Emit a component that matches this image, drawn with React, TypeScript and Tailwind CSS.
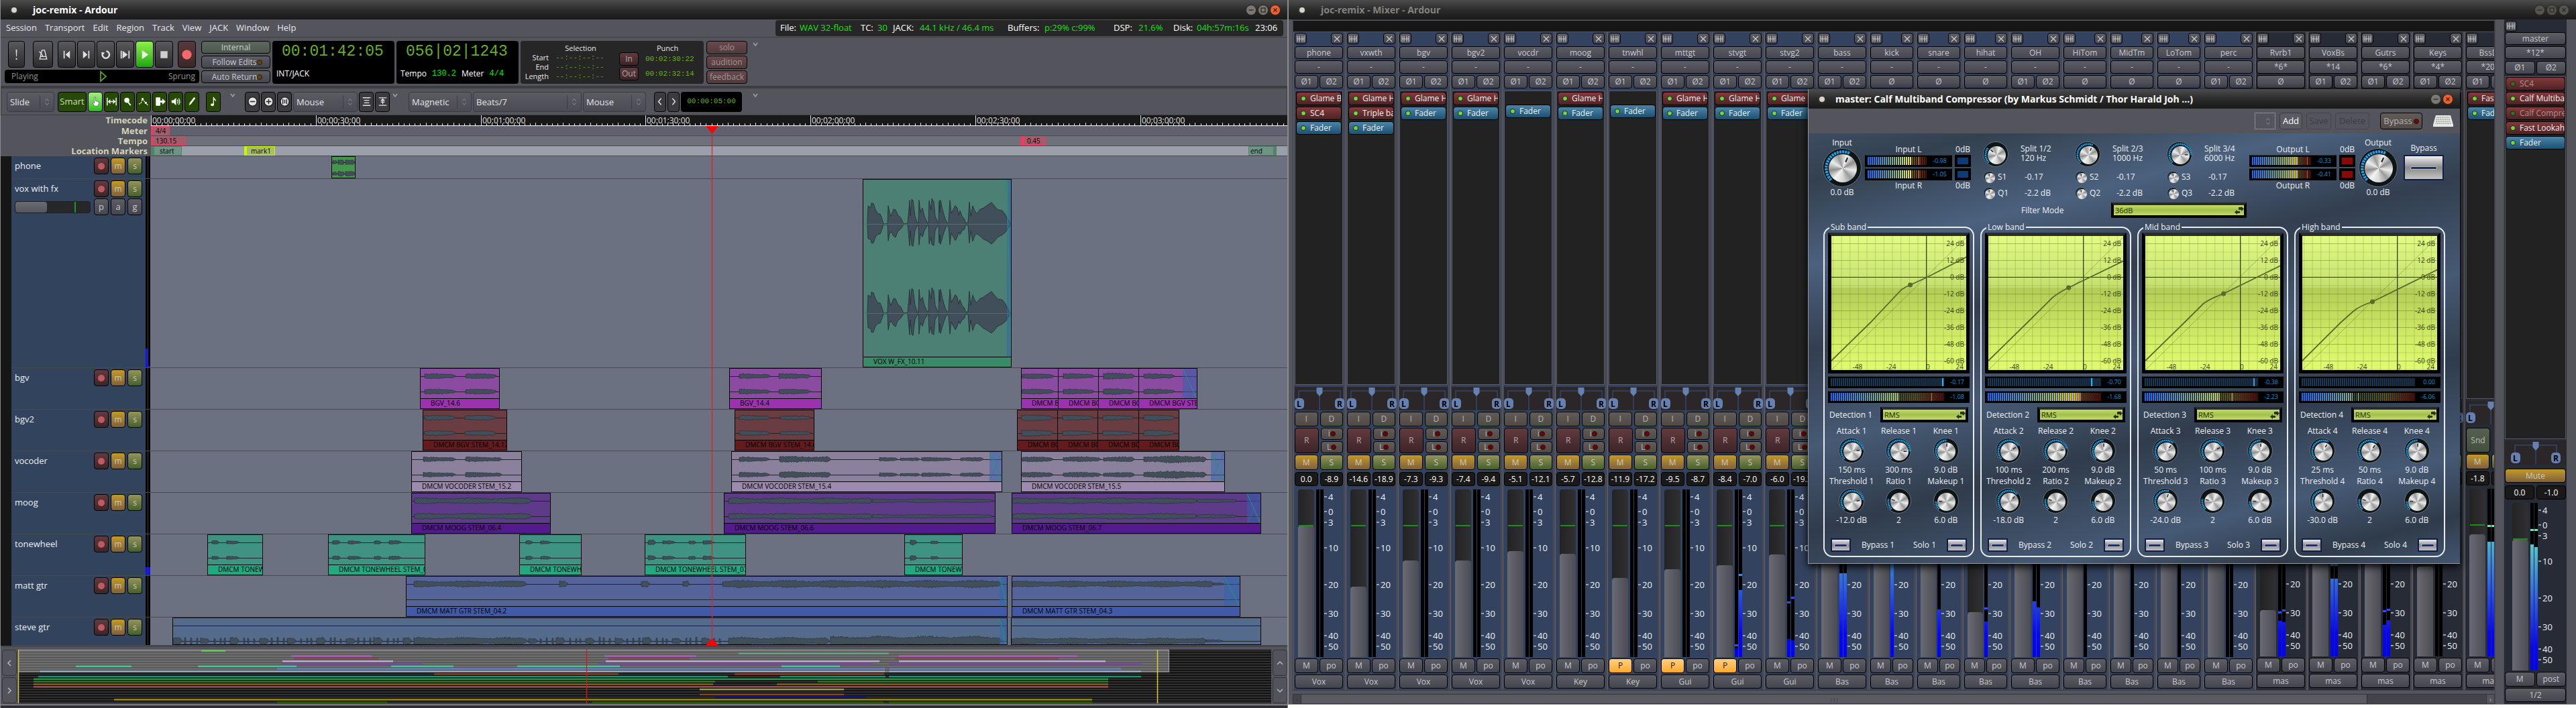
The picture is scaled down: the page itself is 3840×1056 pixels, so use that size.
import React from 'react';
import clsx from 'clsx';

/* ---------- data ---------- */

type Seg = [number, number, number];
type RegionData = { x: number; w: number; label?: string; segs: Seg[]; fade?: number };

const VOX_ENV: [number, number][] = [
  [6, 0], [7, 27], [11, 25], [12, 32], [15, 31], [18, 22], [22, 16], [25, 16], [28, 8], [30, 1], [36, 1], [37, 28], [39, 18],
  [41, 12], [45, 22], [48, 22], [51, 14], [56, 9], [60, 1], [66, 1], [69, 36], [70, 12], [72, 37], [74, 36], [77, 12], [80, 3],
  [82, 2], [83, 36], [85, 18], [88, 24], [91, 12], [95, 3], [97, 2], [98, 35], [101, 22], [102, 38], [105, 34], [107, 12],
  [111, 2], [112, 2], [113, 35], [114, 18], [115, 36], [118, 22], [122, 8], [125, 2], [127, 4], [129, 36], [131, 16], [137, 28],
  [140, 24], [142, 14], [144, 20], [147, 12], [151, 8], [152, 2], [156, 2], [158, 33], [160, 12], [163, 28], [166, 20],
  [169, 16], [174, 22], [178, 24], [184, 28], [191, 33], [195, 28], [200, 22], [207, 20], [212, 14], [215, 8], [221, 0],
];

const blips = (from: number, to: number): Seg[] => {
  const out: Seg[] = [];
  let x = from;
  let i = 0;
  while (x < to) {
    const len = i % 4 === 0 ? 13 : 2;
    out.push([x, Math.min(x + len, to), 6]);
    x += len + (i % 3 === 0 ? 4 : 7);
    i++;
  }
  return out;
};

const TRACKS: {
  name: string;
  row: string;
  body: string;
  tag: string;
  extra?: boolean;
  only?: number;
  meter?: number[];
  regions: RegionData[];
}[] = [
  {
    name: 'phone', row: 'h-[34px]', body: 'bg-[#43964a]', tag: '',
    regions: [{ x: 270, w: 36, segs: [[1, 7, 3], [9, 18, 4], [20, 35, 4]] }],
  },
  {
    name: 'vox with fx', row: 'h-[282px]', body: 'bg-[#4d8074]', tag: 'bg-[#3a8a69]', extra: true, meter: [28, 2],
    regions: [{ x: 1062, w: 222, label: 'VOX W_FX_10.11', segs: [], fade: 7 }],
  },
  {
    name: 'bgv', row: 'h-[62px]', body: 'bg-[#8a4ba0]', tag: 'bg-[#9b32ae]',
    regions: [
      { x: 402, w: 119, label: 'BGV_14.6', segs: [[6, 52, 4], [67, 113, 4]] },
      { x: 863, w: 138, label: 'BGV_14.4', segs: [[14, 60, 4], [73, 120, 4]] },
      { x: 1298, w: 56, label: 'DMCM BGV', segs: [[1, 48, 4]] },
      { x: 1353, w: 61, label: 'DMCM BGV', segs: [[7, 53, 4]] },
      { x: 1413, w: 61, label: 'DMCM BGV', segs: [[7, 53, 5]] },
      { x: 1473, w: 88, label: 'DMCM BGV STEM', segs: [[7, 53, 4]], fade: 22 },
    ],
  },
  {
    name: 'bgv2', row: 'h-[62px]', body: 'bg-[#6a3d42]', tag: 'bg-[#651a1e]',
    regions: [
      { x: 406, w: 126, label: 'DMCM BGV STEM_14.12', segs: [[2, 48, 4], [62, 108, 4]] },
      { x: 871, w: 119, label: 'DMCM BGV STEM_14.6', segs: [[6, 52, 4], [67, 113, 3]] },
      { x: 1292, w: 61, label: 'DMCM BGV', segs: [[6, 53, 5]] },
      { x: 1352, w: 61, label: 'DMCM BGV', segs: [[7, 53, 4]] },
      { x: 1412, w: 62, label: 'DMCM BGV', segs: [[7, 53, 4]] },
      { x: 1473, w: 61, label: 'DMCM BGV', segs: [[7, 53, 5]] },
    ],
  },
  {
    name: 'vocoder', row: 'h-[62px]', body: 'bg-[#8b819c]', tag: 'bg-[#9c8bae]',
    regions: [
      { x: 389, w: 165, label: 'DMCM VOCODER STEM_15.2', segs: [[17, 65, 4], [80, 134, 4]] },
      { x: 866, w: 404, label: 'DMCM VOCODER STEM_15.4', segs: [[11, 56, 4], [71, 147, 5], [220, 247, 3], [251, 280, 3], [283, 328, 3], [341, 375, 3]], fade: 19 },
      { x: 1298, w: 304, label: 'DMCM VOCODER STEM_15.5', segs: [[1, 47, 4], [62, 118, 4], [122, 168, 4], [182, 275, 6]], fade: 21 },
    ],
  },
  {
    name: 'moog', row: 'h-[62px]', body: 'bg-[#5e3b88]', tag: 'bg-[#531b8d]',
    regions: [
      { x: 389, w: 208, label: 'DMCM MOOG STEM_06.4', segs: [[4, 178, 5]] },
      { x: 855, w: 405, label: 'DMCM MOOG STEM_06.6', segs: [[6, 220, 5], [220, 400, 3]] },
      { x: 1284, w: 372, label: 'DMCM MOOG STEM_06.7', segs: [[0, 275, 5], [275, 335, 3]], fade: 21 },
    ],
  },
  {
    name: 'tonewheel', row: 'h-[62px]', body: 'bg-[#409283]', tag: 'bg-[#22a883]', meter: [12, 12],
    regions: [
      { x: 85, w: 83, label: 'DMCM TONEWHEEL', segs: [[6, 16, 3], [28, 46, 3]] },
      { x: 265, w: 145, label: 'DMCM TONEWHEEL STEM_07', segs: [[6, 17, 3], [29, 48, 3], [68, 78, 3], [90, 108, 3]] },
      { x: 550, w: 93, label: 'DMCM TONEWHEEL', segs: [[9, 19, 3], [31, 46, 3]] },
      { x: 737, w: 151, label: 'DMCM TONEWHEEL STEM_07', segs: [[4, 15, 4], [26, 44, 3], [65, 75, 3], [86, 102, 3]] },
      { x: 1124, w: 87, label: 'DMCM TONEWHEEL', segs: [[8, 17, 4], [39, 50, 3]] },
    ],
  },
  {
    name: 'matt gtr', row: 'h-[62px]', body: 'bg-[#546499]', tag: 'bg-[#405aa8]', only: 0,
    regions: [
      { x: 381, w: 897, label: 'DMCM MATT GTR STEM_04.2', segs: [[11, 179, 5], [228, 240, 5], [350, 362, 5], [412, 421, 5], [471, 887, 6]], fade: 12 },
      { x: 1284, w: 341, label: 'DMCM MATT GTR STEM_04.3', segs: [[0, 300, 5], [300, 315, 2]], fade: 24 },
    ],
  },
  {
    name: 'steve gtr', row: 'h-[42px]', body: 'bg-[#546b8c]', tag: 'bg-[#4a6a9a]', only: 1,
    regions: [
      { x: 33, w: 1245, segs: [...blips(0, 355), [359, 528, 6], ...blips(530, 820), [828, 978, 6], [980, 1235, 8]], fade: 12 },
      { x: 1283, w: 373, segs: [[0, 290, 5], [290, 315, 2]] },
    ],
  },
];

const SUMMARY: { color: string; bars: [number, number][] }[] = [
  { color: '#5cc34e', bars: [[299, 335]] },
  { color: '#5fa98a', bars: [[1100, 1324]] },
  { color: '#bf55c4', bars: [[433, 553], [900, 1037], [1339, 1605]] },
  { color: '#8a4a4c', bars: [[437, 564], [906, 1027], [1333, 1577]] },
  { color: '#c0b0cf', bars: [[420, 585], [902, 1310], [1339, 1647]] },
  { color: '#7c49a8', bars: [[419, 629], [891, 1300], [1324, 1700]] },
  { color: '#4cc29a', bars: [[112, 195], [294, 441], [582, 675], [770, 923], [1164, 1251]] },
  { color: '#6a80c0', bars: [[412, 1318], [1325, 1670]] },
  { color: '#8aa4be', bars: [[59, 1318], [1325, 1700]] },
  { color: '#8e4523', bars: [[646, 921], [1094, 1317]] },
  { color: '#1f9070', bars: [[56, 1084], [1162, 1319], [1324, 1700]] },
  { color: '#35924c', bars: [[49, 1651]] },
  { color: '#2c7a2c', bars: [[49, 1065], [1218, 1651]] },
  { color: '#8a5f0a', bars: [[49, 1062], [1157, 1651]] },
  { color: '#9b5058', bars: [[49, 1651]] },
  { color: '#9aa040', bars: [[1042, 1257]] },
  { color: '#222', bars: [] },
  { color: '#8a4523', bars: [[1042, 1257]] },
  { color: '#101a8a', bars: [[1064, 1290]] },
  { color: '#9c8a10', bars: [[169, 1627]] },
  { color: '#226000', bars: [[412, 576], [882, 1316], [1324, 1627]] },
];

type StripData = {
  name: string;
  input?: string;
  mono?: boolean;
  monoPhase?: boolean;
  bus?: boolean;
  plugins: string[];
  vals: [string, string];
  fader: number;
  meter?: number[];
  peak?: number[];
  pre?: boolean;
  out: string;
};

// fader, meter and peak are pixels up from the bottom of the 250px scale
const STRIPS: StripData[] = [
  { name: 'phone', plugins: ['Glame B', 'SC4'], vals: ['0.0', '-8.9'], fader: 196, out: 'Vox' },
  { name: 'vxwth', plugins: ['Glame H', 'Triple ba'], vals: ['-14.6', '-18.9'], fader: 105, out: 'Vox' },
  { name: 'bgv', plugins: ['Glame H'], vals: ['-7.3', '-9.3'], fader: 144, out: 'Vox' },
  { name: 'bgv2', plugins: ['Glame H'], vals: ['-7.4', '-9.4'], fader: 144, out: 'Vox' },
  { name: 'vocdr', plugins: [], vals: ['-5.1', '-12.1'], fader: 158, out: 'Vox' },
  { name: 'moog', plugins: ['Glame H'], vals: ['-5.7', '-12.8'], fader: 154, out: 'Key' },
  { name: 'tnwhl', plugins: [], vals: ['-11.9', '-17.2'], fader: 118, pre: true, out: 'Key' },
  { name: 'mttgt', plugins: ['Glame H'], vals: ['-9.5', '-8.7'], fader: 131, pre: true, out: 'Gui' },
  { name: 'stvgt', plugins: ['Glame H'], vals: ['-8.4', '-7.0'], fader: 137, meter: [13, 100], peak: [16, 121], pre: true, out: 'Gui' },
  { name: 'stvg2', plugins: ['Glame H'], vals: ['-6.0', '-19.2'], fader: 153, meter: [27, 25], peak: [80, 87], out: 'Gui' },
  { name: 'bass', plugins: ['Glame H'], vals: ['-4.0', '-6.2'], fader: 160, meter: [125, 125], out: 'Bas' },
  { name: 'kick', mono: true, plugins: ['Glame H'], vals: ['-3.1', '-4.0'], fader: 170, meter: [150], out: 'Bas' },
  { name: 'snare', mono: true, plugins: ['Glame H'], vals: ['-3.1', '-4.0'], fader: 170, meter: [71], out: 'Bas' },
  { name: 'hihat', mono: true, plugins: ['Glame H'], vals: ['-20', '-24'], fader: 67, meter: [53], peak: [71], out: 'Bas' },
  { name: 'OH', plugins: ['Glame H'], vals: ['-3.1', '-4.0'], fader: 170, meter: [83, 74], out: 'Bas' },
  { name: 'HiTom', mono: true, plugins: ['Glame H'], vals: ['-3.1', '-4.0'], fader: 170, meter: [0], out: 'Bas' },
  { name: 'MidTm', mono: true, plugins: ['Glame H'], vals: ['-3.1', '-4.0'], fader: 170, meter: [0], out: 'Bas' },
  { name: 'LoTom', mono: true, plugins: ['Glame H'], vals: ['-3.1', '-4.0'], fader: 170, meter: [0], out: 'Bas' },
  { name: 'perc', plugins: ['Glame H'], vals: ['-3.1', '-4.0'], fader: 170, out: 'Bas' },
  { name: 'Rvrb1', input: '*6*', monoPhase: true, bus: true, plugins: ['Plate'], vals: ['-20', '-24'], fader: 69, meter: [53, 51], peak: [64, 67], out: 'mas' },
  { name: 'VoxBs', input: '*14', bus: true, plugins: ['SC4'], vals: ['-2.0', '-9.0'], fader: 160, meter: [116, 116], peak: [135, 135], out: 'mas' },
  { name: 'Gutrs', input: '*6*', bus: true, plugins: ['SC4'], vals: ['-6.0', '-9.0'], fader: 139, meter: [47, 54], peak: [66, 68], out: 'mas' },
  { name: 'Keys', input: '*4*', bus: true, plugins: ['SC4'], vals: ['-6.0', '-9.0'], fader: 134, out: 'mas' },
  { name: 'BssDr', input: '*20*', bus: true, plugins: ['Fast Lo'], vals: ['-1.8', '-1.2'], fader: 182, meter: [171, 171], peak: [193, 193], out: 'mas' },
];

const SCALE = [
  { t: '4', y: 11 }, { t: '0', y: 33 }, { t: '3', y: 49 }, { t: '10', y: 87 },
  { t: '20', y: 142 }, { t: '30', y: 185 }, { t: '40', y: 218 }, { t: '50', y: 234 },
];

/* ---------- shared bits ---------- */

const BTN = 'flex items-center justify-center rounded border border-black bg-linear-to-b from-[#5d5d65] to-[#45454f] text-[#c8c8d0] overflow-hidden whitespace-nowrap';
const WARM = 'flex items-center justify-center rounded border border-black bg-linear-to-b from-[#625c59] to-[#504945] text-[#b4b4b4]';
const MUTE = 'flex items-center justify-center rounded border border-black bg-linear-to-b from-[#c39a20] to-[#80603a] text-[#c8c8c0]';
const SOLO = 'flex items-center justify-center rounded border border-black bg-linear-to-b from-[#96945c] to-[#45602a] text-[#c8c8c0]';
const RECB = 'flex items-center justify-center rounded border border-black bg-linear-to-b from-[#633a3e] to-[#3c2528] text-[#b0a8a8]';

const noise = (n: number) => {
  const v = Math.sin(n * 127.1 + 311.7) * 43758.5453;
  return v - Math.floor(v);
};

const WinButton = ({ kind, hot, dim }: { kind: 'min' | 'max' | 'close'; hot?: boolean; dim?: boolean }) => (
  <button aria-label={kind} className="size-4">
    <svg viewBox="0 0 16 16" className="size-4">
      <circle cx="8" cy="8" r="7.5" fill={hot ? '#f0602a' : dim ? '#56544f' : '#7a7872'} stroke="#2a2a2a" />
      <g stroke={dim ? '#2a2a28' : '#35251c'} strokeWidth="1.3" fill="none">
        {kind === 'min' && <path d="M4.5 8h7" />}
        {kind === 'max' && <rect x="5" y="5" width="6" height="6" />}
        {kind === 'close' && <path d="M5.5 5.5l5 5M10.5 5.5l-5 5" />}
      </g>
    </svg>
  </button>
);

const TitleBar = ({ title, active, gap = 'ml-6', children }: { title: string; active?: boolean; gap?: string; children: React.ReactNode }) => (
  <div className="flex h-[29px] shrink-0 items-center bg-linear-to-b from-[#4c4c4c] via-[#2b2b2b] to-[#191919] pl-4 pr-2.5">
    <span className="size-2 rounded-full bg-[#d8d4cc] shadow-[0_0_0_2px_#333]" />
    <h1 className={clsx('text-[14px] font-bold whitespace-nowrap', gap, active ? 'text-white' : 'text-[#85837e]')}>{title}</h1>
    <div className="ml-auto flex gap-0.5">{children}</div>
  </div>
);

const UpDown = () => (
  <svg viewBox="0 0 8 12" className="mr-1.5 h-3 w-2 shrink-0" fill="none" stroke="#8c8c92">
    <path d="M1.5 4.5L4 1.5l2.5 3M1.5 7.5l2.5 3 2.5-3" />
  </svg>
);

const Combo = ({ label, value, className }: { label: string; value: string; className: string }) => (
  <div className={clsx('flex h-[30px] items-center rounded border border-[#3a3a42] bg-linear-to-b from-[#5b5b63] to-[#4b4b54]', className)}>
    <select aria-label={label} defaultValue={value} className="h-5 min-w-0 flex-1 appearance-none bg-transparent pl-1 text-[13px] leading-5 text-[#e4e4e6]">
      <option>{value}</option>
    </select>
    <span className="mr-1.5 h-5 w-px bg-[#3d3d45]" />
    <UpDown />
  </div>
);

const Chevron = () => (
  <svg viewBox="0 0 8 6" className="h-1.5 w-2 shrink-0" fill="none" stroke="#a0a0a4" strokeWidth="1.5">
    <path d="M1 1l3 4 3-4" />
  </svg>
);

/* ---------- editor ---------- */

const ICONS: Record<string, React.ReactNode> = {
  panic: <path d="M9 2h2l-.5 11h-1zM9 15.5h2v2.5H9z" fill="#e0e0e0" />,
  metro: (
    <g fill="none" stroke="#e0e0e0" strokeWidth="1.5">
      <path d="M8 3h4l3.5 14h-11zM5 13h10M10 13L4 5" />
    </g>
  ),
  start: <path d="M5 4v12h1.8V4zM15 4v12l-7-6z" fill="#e0e0e0" />,
  end: <path d="M13.2 4v12H15V4zM5 4v12l7-6z" fill="#e0e0e0" />,
  loop: (
    <g fill="none" stroke="#dcdcdc" strokeWidth="2.6">
      <path d="M6 6.5a5.5 5.5 0 1 0 5-2" />
      <path d="M2.5 6.5h6L6 10.5z" fill="#dcdcdc" stroke="none" />
    </g>
  ),
  sel: <path d="M3 4v12h1.8V4zM15.2 4v12H17V4zM6 4v12l8-6z" fill="#e0e0e0" />,
  play: <path d="M6 3v14l10-7z" fill="#f0f0f0" />,
  stop: <path d="M4.5 4.5h11v11h-11z" fill="#cfcfcf" />,
  rec: <circle cx="10" cy="10" r="7.5" fill="#f4696b" />,
  hand: <path d="M8 3h2v6l5 1.5v3L13.5 17h-5L5 12l1-1 2 1.5z" fill="#fff" stroke="#333" strokeWidth=".6" />,
  range: <path d="M3 4v12M17 4v12M5 10h10M8 7l-3 3 3 3M12 7l3 3-3 3" fill="none" stroke="#fff" strokeWidth="1.5" />,
  zoom: (
    <g>
      <circle cx="8.500" cy="8" r="4" fill="#fff" />
      <path d="M10.5 11l4 5" stroke="#fff" strokeWidth="2" />
    </g>
  ),
  gain: (
    <g>
      <path d="M2 14l3-1 3-7 5 7 4 3" fill="none" stroke="#fff" strokeWidth="1.2" strokeDasharray="2.5 1" />
      <path d="M6.5 4.500h3v3h-3zM11.500 10.500h3v3h-3z" fill="#fff" />
    </g>
  ),
  stretch: <path d="M4 4h6v12H4zM10 9h4V6l4 4-4 4v-3h-4" fill="#fff" stroke="#fff" />,
  listen: (
    <g>
      <path d="M3 8h3l4-4v12l-4-4H3z" fill="#fff" />
      <path d="M12 7q2 3 0 6M14 5q3.5 5 0 10" fill="none" stroke="#fff" strokeWidth="1.3" />
    </g>
  ),
  draw: <path d="M5 16l1-4 7-9 2 2-7 9z" fill="#fff" />,
  note: (
    <g fill="#fff">
      <ellipse cx="8" cy="15" rx="2.5" ry="2" />
      <path d="M9.2 3h1.3c0 3 4 3 3 7-.6-2-1.5-2.5-3-3v8H9.2z" />
    </g>
  ),
  zout: <path d="M10 3a7 7 0 1 0 .1 0zM6 10h8" fill="#e4e4e4" stroke="#222" strokeWidth="1.5" />,
  zin: <path d="M10 3a7 7 0 1 0 .1 0zM6 10h8M10 6v8" fill="#e4e4e4" stroke="#222" strokeWidth="1.5" />,
  zfull: <path d="M10 3a7 7 0 1 0 .1 0zM7 6v8M13 6v8M10 7v6" fill="#e4e4e4" stroke="#222" strokeWidth="1.5" />,
  shrink: <path d="M4 4h12M4 16h12M6 8h8M6 12h8" stroke="#e4e4e4" strokeWidth="1.5" />,
  expand: <path d="M4 4h12M4 16h12M10 6v8M7 9l3-3 3 3M7 11h6" fill="none" stroke="#e4e4e4" strokeWidth="1.4" />,
  prev: <path d="M12 4l-5 6 5 6" fill="none" stroke="#e4e4e4" strokeWidth="1.8" />,
  next: <path d="M8 4l5 6-5 6" fill="none" stroke="#e4e4e4" strokeWidth="1.8" />,
};

const IconButton = ({ icon, className }: { icon: string; className: string }) => (
  <button aria-label={icon} className={clsx('flex shrink-0 items-center justify-center rounded border border-black', className)}>
    <svg viewBox="0 0 20 20" className="size-[19px]">{ICONS[icon]}</svg>
  </button>
);

const GREY = 'bg-linear-to-b from-[#5a5a5e] to-[#2c2c2e]';

const MenuBar = () => (
  <div className="flex h-[27px] items-center border-b border-[#3c3c42]">
    <nav className="flex gap-3 pl-2 text-[13px] text-[#e8e8ea]">
      {['Session', 'Transport', 'Edit', 'Region', 'Track', 'View', 'JACK', 'Window', 'Help'].map(m => (
        <button key={m}>{m}</button>
      ))}
    </nav>
    <div className="ml-auto mr-1.5 flex h-6 w-[757px] items-center rounded bg-[#262626] pl-[7px] text-[13px] whitespace-nowrap text-white">
      <span className="w-[29px]">File:</span><span className="w-[91px] text-[#12e412]">WAV 32-float</span>
      <span className="w-[25px]">TC:</span><span className="w-[23px] text-[#12e412]">30</span>
      <span className="w-10">JACK:</span><span className="w-[131px] text-[#12e412]">44.1 kHz / 46.4 ms</span>
      <span className="w-[55px]">Buffers:</span><span className="w-[103px] text-[#12e412]">p:29% c:99%</span>
      <span className="w-[37px]">DSP:</span><span className="w-[52px] text-[#12e412]">21.6%</span>
      <span className="w-[35px]">Disk:</span><span className="w-[87px] text-[#12e412]">04h:57m:16s</span>
      <span>23:06</span>
    </div>
  </div>
);

const Led = ({ color }: { color: string }) => (
  <span className={clsx('size-2 shrink-0 rounded-full border border-[#1c1c1c]', color)} />
);

const Transport = () => (
  <div className="flex h-[75px] items-start border-b-3 border-[#3c3c42] pt-[5px] pl-1.5 text-[12px]">
    <div className="w-[290px]">
      <div className="flex h-10 pl-[5px]">
        <IconButton icon="panic" className={clsx(GREY, 'mr-3 w-[25px]')} />
        <IconButton icon="metro" className={clsx(GREY, 'mr-[7px] w-[30px]')} />
        <div className="flex gap-0.5">
          {['start', 'end', 'loop', 'sel'].map(i => <IconButton key={i} icon={i} className={clsx(GREY, 'w-[27px]')} />)}
          <IconButton icon="play" className="w-[27px] bg-linear-to-b from-[#8cf04a] to-[#12a80e]" />
          <IconButton icon="stop" className={clsx(GREY, 'w-[27px]')} />
        </div>
        <IconButton icon="rec" className="ml-[7px] w-[27px] bg-linear-to-b from-[#5a3a3c] to-[#3c2628]" />
      </div>
      <div className="mt-[3px] flex h-5 items-center justify-between rounded bg-black px-2.5 pr-1.5 text-[#909090]">
        <span>Playing</span>
        <svg viewBox="0 0 12 18" className="h-[18px] w-3" fill="none" stroke="#5c9a22" strokeWidth="1.8"><path d="M2 2v14l8-7z" /></svg>
        <span>Sprung</span>
      </div>
    </div>
    <div className="ml-[3px] flex w-[103px] flex-col gap-[3px]">
      <button className="h-[19px] rounded border border-black bg-linear-to-b from-[#5c685c] to-[#4c5a4c] leading-4 text-[#c8ccd0]">Internal</button>
      <button className={clsx(BTN, 'h-[19px] justify-between pr-1 pl-2')}>Follow Edits<Led color="bg-[#6a4400]" /></button>
      <button className={clsx(BTN, 'h-[19px] justify-between pr-1 pl-2')}>Auto Return<Led color="bg-[#6a4400]" /></button>
    </div>
    <div className="ml-[3px] flex h-16 w-[182px] flex-col justify-between rounded bg-black px-1.5 pb-1.5">
      <span className="pl-2 font-[Liberation_Mono,monospace] text-[23px] leading-8 text-[#66b023]">00:01:42:05</span>
      <span className="text-white">INT/JACK</span>
    </div>
    <div className="ml-[3px] flex h-16 w-[182px] flex-col justify-between rounded bg-black px-1.5 pb-1.5">
      <span className="pl-2 font-[Liberation_Mono,monospace] text-[23px] leading-8 text-[#66b023]">056|02|1243</span>
      <div className="flex items-center gap-2 text-white">
        Tempo <span className="font-[Liberation_Mono,monospace] text-[#12e412]">130.2</span>
        Meter <span className="font-[Liberation_Mono,monospace] text-[#12e412]">4/4</span>
      </div>
    </div>
    <div className="ml-[3px] flex h-16 w-[273px] rounded bg-[#262626] text-[11px] text-[#e8e8e8]">
      <div className="w-[147px] pt-1">
        <div className="pl-8 text-center leading-[14px]">Selection</div>
        {['Start', 'End', 'Length'].map(t => (
          <div key={t} className="flex h-3.5 items-center leading-[14px]">
            <span className="w-[42px] text-right">{t}</span>
            <span className="ml-2.5 font-[Liberation_Mono,monospace] text-[#5f9a2a]">--:--:--:--</span>
          </div>
        ))}
      </div>
      <div className="flex-1 pt-1">
        <div className="pl-14 leading-[13px]">Punch</div>
        {[['In', '00:02:30:22'], ['Out', '00:02:32:14']].map(([b, t]) => (
          <div key={b} className="mb-0.5 flex items-center">
            <button className={clsx(RECB, 'h-5 w-[29px] text-[12px]')}>{b}</button>
            <span className="ml-2.5 font-[Liberation_Mono,monospace] text-[#66b023]">{t}</span>
          </div>
        ))}
      </div>
    </div>
    <div className="ml-1 flex w-[61px] flex-col gap-0.5">
      {['solo', 'audition', 'feedback'].map(t => (
        <button key={t} className="h-5 rounded border border-black bg-linear-to-b from-[#6a484c] to-[#503a3c] leading-4 text-[#a09496]">{t}</button>
      ))}
    </div>
    <div className="ml-2 pt-0.5"><Chevron /></div>
  </div>
);

const EditBar = () => (
  <div className="flex h-[41px] items-center border border-[#3c3c42] pl-2">
    <Combo label="Edit mode" value="Slide" className="w-[71px]" />
    <div className="ml-[5px] flex gap-0.5">
      <button className="h-[30px] w-[43px] rounded border border-black bg-[#264a06] text-[13px] text-[#d0dcc0]">Smart</button>
      <IconButton icon="hand" className="h-[30px] w-[22px] bg-linear-to-b from-[#9cf07c] to-[#1fbf12]" />
      {['range', 'zoom', 'gain', 'stretch', 'listen', 'draw'].map(i => (
        <IconButton key={i} icon={i} className="h-[30px] w-[22px] bg-[#264a06]" />
      ))}
    </div>
    <IconButton icon="note" className="ml-2.5 h-[30px] w-[22px] bg-[#264a06]" />
    <div className="mx-[14px] pb-5"><Chevron /></div>
    <div className="flex gap-0.5">
      {['zout', 'zin', 'zfull'].map(i => <IconButton key={i} icon={i} className="h-[30px] w-[22px] bg-[#3c3c40]" />)}
      <Combo label="Zoom focus" value="Mouse" className="w-[96px]" />
      {['shrink', 'expand'].map(i => <IconButton key={i} icon={i} className="h-[30px] w-[22px] bg-[#3c3c40]" />)}
    </div>
    <div className="mr-4 ml-1 pb-5"><Chevron /></div>
    <div className="flex gap-0.5">
      <Combo label="Snap mode" value="Magnetic" className="w-[94px]" />
      <Combo label="Snap to" value="Beats/7" className="w-[162px]" />
      <Combo label="Edit point" value="Mouse" className="w-[94px]" />
    </div>
    <div className="ml-3 flex gap-0.5">
      <IconButton icon="prev" className="h-[30px] w-[18px] bg-[#3c3c40]" />
      <IconButton icon="next" className="h-[30px] w-[18px] bg-[#3c3c40]" />
      <span className="flex h-[30px] w-[91px] items-center justify-center rounded bg-black font-[Liberation_Mono,monospace] text-[11px] text-[#66b023]">00:00:05:00</span>
    </div>
    <div className="ml-4 pb-5"><Chevron /></div>
  </div>
);

const Rulers = () => {
  const marks = ['00:00:00:00', '00:00:30:00', '00:01:00:00', '00:01:30:00', '00:02:00:00', '00:02:30:00', '00:03:00:00'];
  const label = 'w-56 shrink-0 pr-[5px] text-right text-[13px] font-bold leading-[15px] text-[#d4d2b8]';
  const tag = 'absolute top-0 flex h-3.5 items-center border text-[10px] text-black';
  return (
    <div>
      <div className="flex h-4">
        <div className={label}>Timecode</div>
        <div className="relative flex-1 overflow-hidden border-b border-white bg-[#191919]">
          <svg width="1700" height="15" className="absolute" stroke="#e8e8e8">
            {Array.from({ length: 208 }, (_, i) => {
              const x = Math.round(i * 8.192) + 0.5;
              return <path key={i} d={`M${x} ${i % 30 === 0 ? 0 : i % 5 === 0 ? 11 : 12}V15`} />;
            })}
          </svg>
          {marks.map((m, i) => (
            <span key={m} className="absolute text-[12px] leading-[15px] text-[#e0e0e0]" style={{ left: Math.round(i * 245.8) + 2 }}>{m}</span>
          ))}
        </div>
      </div>
      <div className="flex h-[15px]">
        <div className={label}>Meter</div>
        <div className="relative flex-1 border-b border-[#4c4c4c] bg-[#5f626e]">
          <span className={clsx(tag, 'left-0 w-7 border-[#e8405c] border-l-3 bg-[#a85a6c] pl-1')}>4/4</span>
        </div>
      </div>
      <div className="flex h-[15px]">
        <div className={label}>Tempo</div>
        <div className="relative flex-1 border-b border-[#4c4c4c] bg-[#6e707c]">
          <span className={clsx(tag, 'left-0 w-[52px] border-[#e8405c] border-l-3 bg-[#a85a6c] pl-1')}>130.15</span>
          <span className={clsx(tag, 'left-[1296px] w-[38px] border-[#e8405c] border-l-6 bg-[#a85a6c] pl-1')}>0.45</span>
        </div>
      </div>
      <div className="flex h-[15px]">
        <div className={label}>Location Markers</div>
        <div className="relative flex-1 border-b border-[#4c4c4c] bg-[#999fab]">
          <span className={clsx(tag, 'left-0 w-[46px] border-[#4f8566] border-l-5 bg-[#6f9484] pl-2')}>start</span>
          <span className={clsx(tag, 'left-[139px] w-[46px] border-[#c4f800] border-l-4 bg-[#a8bf68] pl-1.5')}>mark1</span>
          <span className={clsx(tag, 'left-[1636px] w-[42px] border-[#4f8566] border-r-5 bg-[#6f9484] pl-0.5')}>end</span>
        </div>
      </div>
    </div>
  );
};

const wavePath = (segs: Seg[], cy: number, seed: number) =>
  segs
    .map(([a, b, amp]) => {
      const up: string[] = [];
      const down: string[] = [];
      const tail = Math.min(5, (b - a) / 3);
      for (let x = a; x <= b; x += 1) {
        const edge = Math.min(1, (b - x + 1) / tail);
        const swell = 0.85 + 0.15 * Math.sin(x / 11);
        up.push(`${x} ${(cy - amp * edge * swell * (0.6 + 0.4 * noise(x + seed))).toFixed(1)}`);
        down.unshift(`${x} ${(cy + amp * edge * swell * (0.6 + 0.4 * noise(x * 3 + seed))).toFixed(1)}`);
      }
      return `M${up.join('L')}L${down.join('L')}Z`;
    })
    .join('');

const voxPath = (cy: number) => {
  const up = VOX_ENV.map(([x, v], i) => `${x} ${(cy - v + noise(i)).toFixed(1)}`);
  const down = VOX_ENV.map(([x, v], i) => `${x} ${(cy + v * (0.8 + 0.15 * noise(i))).toFixed(1)}`).reverse();
  return `M${up.join('L')}L${down.join('L')}Z`;
};

const Region = ({ r, body, tag, only, vox, h }: { r: RegionData; body: string; tag: string; only?: number; vox?: boolean; h: number }) => {
  const centers = [Math.round(h / 4), Math.round((h * 3) / 4)];
  return (
    <div className="absolute inset-y-0 flex flex-col border border-black" style={{ left: r.x, width: r.w }}>
      <div className={clsx('min-h-0 flex-1 overflow-hidden', body)}>
        <svg width={r.w} height={h} className="block">
          {centers.map((cy, c) => (
            <g key={c}>
              {!vox && <path d={`M0 ${cy + 0.5}H${r.w}`} stroke="#20242a" />}
              {(only === undefined || only === c) && (
                <path d={vox ? voxPath(cy) : wavePath(r.segs, cy, r.x + c * 57)} fill="#414f5a" stroke="#222a30" strokeWidth={vox ? 0.8 : 0.6} />
              )}
              {vox && <path d={`M0 ${cy + 0.5}H${r.w}`} stroke="#5e6a6e" />}
            </g>
          ))}
          {r.fade && (
            <g>
              <rect x={r.w - r.fade - 1} width={r.fade} height={h} fill="#2f62b0" opacity=".5" />
              <path d={`M${r.w - r.fade - 1} 0L${r.w - 2} ${h}`} stroke="#1f9a70" fill="none" />
              <path d={`M${r.w - r.fade - 1} ${h}L${r.w - 2} 0`} stroke="#2a7a9a" opacity=".5" fill="none" />
            </g>
          )}
        </svg>
      </div>
      {r.label && (
        <div className={clsx('h-[15px] shrink-0 overflow-hidden border-t border-black pl-[15px] text-[10px] leading-[13px] whitespace-nowrap text-black', tag)}>
          {r.label}
        </div>
      )}
    </div>
  );
};

const HEIGHTS: Record<string, number> = { phone: 33, 'vox with fx': 265 };

const Tracks = () => (
  <div className="border-l-[16px] border-[#161616]">
    {TRACKS.map(t => (
      <div key={t.name} className={clsx('flex border-b border-[#48484e]', t.row)}>
        <div className="w-[200px] shrink-0 bg-[#32435e] px-[5px] pt-0.5">
          <div className="flex items-center gap-[3px]">
            <span className="min-w-0 flex-1 text-[13px] text-[#eceef0]">{t.name}</span>
            <button aria-label="record" className={clsx(RECB, 'h-[25px] w-[22px]')}><span className="size-2.5 rounded-full bg-[#c05a60]" /></button>
            <button className={clsx(MUTE, 'h-[25px] w-[22px] text-[12px]')}>m</button>
            <button className={clsx(SOLO, 'h-[25px] w-[22px] text-[12px]')}>s</button>
          </div>
          {t.extra && (
            <div className="mt-0.5 flex items-center gap-[3px]">
              <div className="mr-0.5 flex h-[18px] flex-1 rounded-sm border border-[#202020] bg-[#262728]">
                <div className="w-[47px] rounded-sm bg-linear-to-b from-[#6b6b73] to-[#55555d]" />
                <div className="ml-[41px] w-0.5 bg-[#1c9a1c]" />
              </div>
              {['p', 'a', 'g'].map(b => <button key={b} className={clsx(BTN, 'h-[25px] w-[22px] text-[13px]')}>{b}</button>)}
            </div>
          )}
        </div>
        <div className="flex w-[7px] shrink-0 items-end gap-px bg-[#3a3a40]">
          {[0, 1].map(c => (
            <div key={c} className="flex h-full w-[3px] items-end bg-black">
              <div className="w-full bg-[#1212f8]" style={{ height: t.meter ? t.meter[c] : 0 }} />
            </div>
          ))}
        </div>
        <div className="relative min-w-0 flex-1 overflow-hidden bg-[#6b7180]">
          {t.regions.map(r => (
            <Region key={r.x} r={r} body={t.body} tag={t.tag} only={t.only} vox={t.extra} h={HEIGHTS[t.name] ?? 45} />
          ))}
        </div>
      </div>
    ))}
  </div>
);

const ScrollPair = ({ up, down }: { up: string; down: string }) => (
  <div className="flex w-[22px] shrink-0 flex-col gap-0.5">
    {[up, down].map(d => (
      <button key={d} aria-label="scroll" className="flex flex-1 items-center justify-center rounded border border-[#34343a] bg-[#53535c]">
        <svg viewBox="0 0 10 10" className="size-2.5" fill="none" stroke="#b8b8bc" strokeWidth="1.5"><path d={d} /></svg>
      </button>
    ))}
  </div>
);

const Summary = () => (
  <div className="flex h-[88px] gap-0.5 border-t-2 border-[#45454b] pt-1 pb-0.5 pl-0.5">
    <ScrollPair up="M7 1L3 5l4 4" down="M3 1l4 4-4 4" />
    <svg viewBox="0 0 1868 81" preserveAspectRatio="none" className="h-full min-w-0 flex-1 bg-black">
      {SUMMARY.map((s, i) => <rect key={i} y={i * 3.87 + 0.7} width="1868" height="2.7" fill="#303030" />)}
      <rect width="1716" height="34" fill="#fff" opacity=".3" />
      {SUMMARY.map((s, i) => s.bars.map(([a, b]) => (
        <rect key={`${i}-${a}`} x={a - 26} y={i * 3.87 + 0.7} width={b - a} height="2.5" fill={s.color} />
      )))}
      <rect x=".5" y=".5" width="1715" height="33" fill="none" stroke="#b4b4b4" strokeWidth=".8" />
      <path d="M.5 0v81M1698.5 0v81" stroke="#d8d030" strokeWidth="1.5" />
      <path d="M847.5 0v81" stroke="#e01414" strokeWidth="1.3" />
    </svg>
    <ScrollPair up="M1 7l4-4 4 4" down="M1 3l4 4 4-4" />
  </div>
);

const Editor = () => (
  <section className="min-w-0 flex-1 border-r border-l border-[#8a8a8a] bg-[#54545c]">
    <TitleBar title="joc-remix - Ardour" active>
      <WinButton kind="min" />
      <WinButton kind="max" />
      <WinButton kind="close" hot />
    </TitleBar>
    <MenuBar />
    <Transport />
    <EditBar />
    <div className="relative">
      <Rulers />
      <Tracks />
      <svg className="pointer-events-none absolute inset-y-0 left-[1050px] h-full w-[21px] overflow-visible" aria-label="playhead">
        <path d="M10.5 16V791" stroke="#d8262a" strokeWidth="1.3" />
        <path d="M1 16h19l-9.5 11zM1 791h19l-9.5-11z" fill="#f00" />
      </svg>
    </div>
    <Summary />
    <div className="h-[5px] border-t border-[#a8a8a8] bg-[#2e2e34]" />
  </section>
);

/* ---------- mixer ---------- */

const Panner = () => (
  <div className="bg-[#2b2728]">
    <svg viewBox="0 0 74 35" className="mx-auto block h-[35px] w-[74px]">
      <path d="M6 17V6h62v11M37 8v27" fill="none" stroke="#33486a" strokeWidth="1.5" />
      <path d="M32.5 1h9v8L37 14l-4.5-5z" fill="#6680b0" />
      <rect x="0" y="17" width="14" height="16" rx="5" fill="#6680b0" />
      <rect x="60" y="17" width="14" height="16" rx="5" fill="#6680b0" />
      <text x="3" y="30" fontSize="12" fontWeight="700" fontFamily="Open Sans, sans-serif">L</text>
      <text x="63" y="30" fontSize="12" fontWeight="700" fontFamily="Open Sans, sans-serif">R</text>
    </svg>
  </div>
);

const Processor = ({ name, fader, off }: { name: string; fader?: boolean; off?: boolean }) => (
  <button
    className={clsx(
      'mb-0.5 flex h-5 w-full items-center gap-1.5 overflow-hidden rounded border border-black pl-1.5 text-[12px] whitespace-nowrap',
      fader ? 'bg-linear-to-b from-[#4c84a8] to-[#1a5070]' : 'bg-linear-to-b from-[#843a3c] to-[#4e2224]',
      off ? 'text-[#b09090]' : 'text-[#f0f0f0]',
    )}
  >
    <span className={clsx('size-2 shrink-0 rounded-full border border-[#202020]', off ? 'bg-[#3a6a20]' : 'bg-[#70d840]')} />
    {name}
  </button>
);

const FaderBlock = ({ fader, meter = [0, 0], peak = [], mono }: { fader: number; meter?: number[]; peak?: number[]; mono?: boolean }) => (
  <div className="mt-[5px] flex h-[250px] pl-[5px]">
    <div className={clsx('relative flex flex-col justify-end rounded-sm bg-linear-to-r from-[#232324] to-[#303032]', mono ? 'w-[23px]' : 'w-6')}>
      <input type="range" aria-label="Gain" className="sr-only" />
      <div className="rounded-t-sm bg-linear-to-r from-[#6a6a72] to-[#4c4c54]" style={{ height: fader }} />
      <div className="absolute inset-x-px bottom-[195px] h-0.5 bg-[#189018]" />
    </div>
    <div className={clsx('flex gap-px', mono ? 'ml-0.5' : 'ml-[3px]')}>
      {meter.map((m, i) => (
        <div key={i} className="relative flex w-[5px] items-end bg-black">
          <div
            className="w-full bg-[linear-gradient(0deg,#0000ff_0%,#0505ff_14%,#2a58e8_40%,#4090d8_58%,#58c8cc_75%,#66e0b8_100%)] bg-[length:100%_250px] bg-bottom bg-no-repeat"
            style={{ height: m }}
          />
          {peak[i] !== undefined && (
            <div className={clsx('absolute inset-x-0 h-[3px]', peak[i] > 180 ? 'bg-[#66e8b8]' : peak[i] > 110 ? 'bg-[#4090d8]' : 'bg-[#2a50f0]')} style={{ bottom: peak[i] }} />
          )}
        </div>
      ))}
    </div>
    <div className="ml-px text-[13px] text-[#eef0f2]">
      {SCALE.map((s, i) => (
        <div key={s.t} className="flex h-3.5 items-center gap-0.5 leading-[14px]" style={{ marginTop: i ? s.y - SCALE[i - 1].y - 14 : 4 }}>
          <span className="h-0.5 w-1 bg-[#98a0ac]" />{s.t}
        </div>
      ))}
    </div>
  </div>
);

const WidthIcon = () => (
  <svg viewBox="0 0 14 12" className="h-3 w-3.5" stroke="#c8c8c8" fill="none" strokeWidth="1.2">
    <path d="M2 1.5v9M5 1.5v9M9 1.5v9M12 1.5v9M2 6h10" />
  </svg>
);

const CloseIcon = () => (
  <svg viewBox="0 0 12 12" className="size-3" stroke="#c8c8c8" fill="none" strokeWidth="1.3">
    <path d="M2 2l8 8M10 2l-8 8" />
  </svg>
);

const Values = ({ vals }: { vals: [string, string] }) => (
  <div className="flex h-[21px] gap-[3px]">
    {vals.map((v, i) => (
      <span key={i} className="flex min-w-0 flex-1 items-center justify-center rounded border border-black bg-[#191919] text-[12px] text-white">{v}</span>
    ))}
  </div>
);

const Strip = ({ s }: { s: StripData }) => (
  <div
    className={clsx(
      'shrink-0 border-r-3 border-l border-l-[#62626a] border-r-[#4a4a50] px-px pt-px pb-0.5 text-[12px]',
      s.mono ? 'w-[70px]' : 'w-[78px]',
      s.bus ? 'bg-[#262b35]' : 'bg-[#33435f]',
    )}
  >
    <div className="flex h-[17px] justify-between">
      <button aria-label="width" className={clsx(BTN, 'w-[18px]')}><WidthIcon /></button>
      <button aria-label="hide" className={clsx(BTN, 'w-[18px]')}><CloseIcon /></button>
    </div>
    <button className={clsx(BTN, 'mt-[3px] h-[19px] w-full')}>{s.name}</button>
    <button className={clsx(BTN, 'mt-0.5 h-5 w-full')}>{s.input ?? '-'}</button>
    <div className="mt-0.5 flex h-5 gap-0.5">
      {(s.mono || s.monoPhase ? ['Ø'] : ['Ø1', 'Ø2']).map(p => <button key={p} className={clsx(BTN, 'flex-1')}>{p}</button>)}
    </div>
    <div className={clsx('mt-[3px] border border-[#5a5a60] bg-[#222] px-px', s.bus ? 'h-[460px]' : 'h-[439px]', s.plugins.length ? 'pt-px' : 'pt-5')}>
      {s.plugins.map(p => <Processor key={p} name={p} />)}
      <Processor name="Fader" fader />
    </div>
    <div className="mt-[3px]"><Panner /></div>
    {s.bus ? (
      <div className="mt-[5px] h-[37px]">
        <button className="h-full w-1/2 rounded border border-black bg-linear-to-b from-[#566050] to-[#454f40] text-[#b8bcb8]">Snd</button>
      </div>
    ) : (
      <>
        <div className="mt-0.5 flex h-[22px] gap-[3px]">
          <button className={clsx(WARM, 'flex-1')}>I</button>
          <button className={clsx(WARM, 'flex-1 shadow-[inset_0_0_0_1px_#3f5c3a]')}>D</button>
        </div>
        <div className="mt-0.5 flex h-[38px] gap-[3px]">
          <button className={clsx(RECB, 'flex-1')}>R</button>
          <div className="flex flex-1 flex-col gap-0.5">
            {['i', 'L'].map(b => (
              <button key={b} className={clsx(WARM, 'min-h-0 flex-1 justify-between px-1 leading-none')}>{b}<Led color="bg-[#700000]" /></button>
            ))}
          </div>
        </div>
      </>
    )}
    <div className="mt-0.5 mb-[3px] flex h-[23px] gap-[3px]">
      <button className={clsx(MUTE, 'flex-1')}>M</button>
      <button className={clsx(SOLO, 'flex-1')}>S</button>
    </div>
    <Values vals={s.vals} />
    <FaderBlock fader={s.fader} meter={s.meter} peak={s.peak} mono={s.mono} />
    <div className="mt-0.5 flex h-[22px] gap-0.5">
      {s.pre ? (
        <button className="flex-1 rounded border border-black bg-linear-to-b from-[#ffd080] to-[#ffa820] text-[#302000]">P</button>
      ) : (
        <button className={clsx(BTN, 'flex-1')}>M</button>
      )}
      <button className={clsx(BTN, 'flex-1')}>po</button>
    </div>
    <button className={clsx(BTN, 'mt-0.5 h-[21px] w-full')}>{s.out}</button>
  </div>
);

const MasterStrip = () => (
  <div className="w-[93px] shrink-0 bg-[#262b35] px-px pt-0.5 pb-0.5 text-[12px]">
    <button aria-label="width" className={clsx(BTN, 'h-4 w-[18px]')}><WidthIcon /></button>
    <button className={clsx(BTN, 'mt-px h-[19px] w-full')}>master</button>
    <button className={clsx(BTN, 'mt-0.5 h-[19px] w-full')}>*12*</button>
    <div className="mt-[3px] flex h-5 gap-0.5">
      <button className={clsx(BTN, 'flex-1')}>Ø1</button>
      <button className={clsx(BTN, 'flex-1')}>Ø2</button>
    </div>
    <div className="mt-[3px] h-[541px] border border-[#5a5a60] bg-[#222]">
      <Processor name="SC4" off />
      <Processor name="Calf Multiband" />
      <Processor name="Calf Compressor" off />
      <Processor name="Fast Lookahead" />
      <Processor name="Fader" fader />
    </div>
    <div className="mt-[3px]"><Panner /></div>
    <button className={clsx(MUTE, 'mt-1.5 mb-1 h-[21px] w-full')}>Mute</button>
    <Values vals={['0.0', '-1.0']} />
    <div className="pl-1.5"><FaderBlock fader={195} meter={[188, 184]} peak={[208, 208]} /></div>
    <div className="mt-0.5 flex h-[22px] gap-0.5">
      <button className={clsx(BTN, 'flex-1')}>M</button>
      <button className={clsx(BTN, 'flex-1')}>post</button>
    </div>
    <button className={clsx(BTN, 'mt-0.5 h-[21px] w-full')}>1/2</button>
  </div>
);

const Mixer = () => (
  <section className="w-1/2 border-b border-l border-[#8a8a8a] bg-[#54545c]">
    <TitleBar title="joc-remix - Mixer - Ardour">
      <WinButton kind="min" dim />
      <WinButton kind="max" dim />
      <WinButton kind="close" dim />
    </TitleBar>
    <div className="flex">
      <div className="min-w-0 flex-1 pl-1.5">
        <div className="border border-[#3c3c42] bg-[#54545c] pt-px">
          <div className="h-4 bg-[#171717]" />
          <div className="mt-px flex overflow-hidden">
            {STRIPS.map(s => <Strip key={s.name} s={s} />)}
          </div>
        </div>
        <div className="mt-[5px] flex h-[15px] border border-[#34343a] bg-[#43434b]">
          <button className="w-3 border-r border-[#34343a] text-[11px] leading-3 text-[#34343a]">‹</button>
          <div className="flex flex-1">
            <div className="flex w-[90%] items-center justify-center border-r border-[#2c2c32] bg-[#5a5a62] text-[8px] text-[#34343a]">|||</div>
          </div>
          <button className="w-3 border-l border-[#34343a] bg-[#54545c] text-[11px] leading-3 text-[#b0b0b4]">›</button>
        </div>
      </div>
      <div className="w-3.5 shrink-0 border-x border-[#48484e]" />
      <MasterStrip />
      <div className="w-3.5 shrink-0" />
    </div>
  </section>
);

/* ---------- compressor plugin ---------- */

const Knob = ({ label, f, big, small }: { label: string; f: number; big?: boolean; small?: boolean }) => {
  const a = ((f * 270 - 135) * Math.PI) / 180;
  const px = (r: number) => 20 + r * Math.sin(a);
  const py = (r: number) => 20 - r * Math.cos(a);
  const s = -135 * (Math.PI / 180);
  const size = big ? 'size-[58px]' : small ? 'size-[18px]' : 'size-[38px]';
  const face = big ? 'size-[42px]' : small ? 'size-[15px]' : 'size-[27px]';
  return (
    <div className={clsx('grid shrink-0 place-items-center rounded-full border border-[#6a7078] bg-[#0d1517]', size)}>
      <input type="range" aria-label={label} className="sr-only" />
      <div className={clsx('col-start-1 row-start-1 rounded-full bg-[conic-gradient(from_20deg,#f4f4f4,#8e8e8e,#ececec,#9a9a9a,#d8d8d8,#f4f4f4,#8e8e8e,#ececec,#9a9a9a,#f4f4f4)]', face)} />
      <svg viewBox="0 0 40 40" className={clsx('col-start-1 row-start-1', size)}>
        <path
          d={`M${20 + 17 * Math.sin(s)} ${20 - 17 * Math.cos(s)}A17 17 0 ${f > 0.667 ? 1 : 0} 1 ${px(17)} ${py(17)}`}
          fill="none" stroke="#18a4f0" strokeWidth="3" strokeDasharray="2 .8"
          opacity={small ? 0.5 : 1}
        />
        <path d={`M${px(7)} ${py(7)}L${px(12)} ${py(12)}`} stroke="#222" strokeWidth={small ? 2.5 : 1.5} />
      </svg>
    </div>
  );
};

const STRIPES = 'bg-[repeating-linear-gradient(90deg,transparent_0_2px,#000_2px_3px)]';
const COLORS = 'bg-[linear-gradient(90deg,#0a6cff,#3c90c8_25%,#7ab090_45%,#c4d840_62%,#fff000_75%,#ff8000_88%,#e82010)]';

const MeterBar = ({ lit, peak, value, blue }: { lit: number; peak?: number; value: string; blue?: boolean }) => (
  <div className="flex h-[18px] items-center border border-black border-t-[#333] bg-black px-[3px] py-0.5">
    <div className={clsx('h-full min-w-0 flex-1', blue ? 'bg-[#1c70a4]' : COLORS)}>
      <div className={clsx('flex h-full', STRIPES)}>
        <div style={{ width: `${lit}%` }} className={blue ? 'bg-black/45' : ''} />
        <div style={{ width: `${(peak ?? lit) - lit}%` }} className="bg-black/60" />
        {peak !== undefined && <div className={clsx('w-0.5', blue && 'bg-[#2cacff]')} />}
        <div className={clsx('flex-1', blue ? 'bg-black/45' : 'bg-black/60')} />
      </div>
    </div>
    <span className="w-[34px] pr-1 text-right text-[9px] text-[#1c90d0]">{value}</span>
  </div>
);

const LcdSelect = ({ label, value, className }: { label: string; value: string; className: string }) => (
  <div className={clsx('h-[23px] border-4 border-black border-t-[#2a2a2a]', className)}>
    <div className="flex h-full items-center bg-linear-to-b from-[#c4dc68] via-[#a4c04c] to-[#c4dc68]">
      <select aria-label={label} defaultValue={value} className="h-full min-w-0 flex-1 appearance-none bg-transparent pl-0.5 text-[11px] leading-[15px] text-[#222c08]">
        <option>{value}</option>
      </select>
      <svg viewBox="0 0 14 12" className="h-3 w-3.5" fill="#2a3410"><path d="M6 1h4V0l4 3.5L10 7V5H6zM8 7H4V5L0 8.5 4 12v-2h4z" /></svg>
    </div>
  </div>
);

const StereoMeter = ({ name, l, r, hot }: { name: string; l: string; r: string; hot?: boolean }) => {
  const led = hot ? 'bg-[#8a0808]' : 'bg-[#0c3c78]';
  return (
    <div className="flex gap-1 pt-4 text-center leading-4">
      <div className="w-[130px]">
        <div>{name} L</div>
        <div className="flex flex-col gap-0.5">
          <MeterBar lit={hot ? 78 : 74} peak={hot ? 93 : 86} value={l} />
          <MeterBar lit={hot ? 78 : 74} peak={hot ? 93 : 86} value={r} />
        </div>
        <div>{name} R</div>
      </div>
      <div className="w-6">
        <div className="-mx-1">0dB</div>
        <div className="flex h-[38px] flex-col gap-0.5">
          {[0, 1].map(i => <div key={i} className={clsx('flex-1 border-4 border-black', led)} />)}
        </div>
        <div className="-mx-1">0dB</div>
      </div>
    </div>
  );
};

const Toggle = ({ label, className }: { label: string; className: string }) => (
  <button aria-label={label} className={clsx('flex items-center justify-center border-2 border-[#101c48] bg-linear-to-b from-[#f0f0f0] via-[#8a8a8a] to-[#c4c4c4]', className)}>
    <span className="h-[3px] w-2/3 rounded-sm bg-[#1c3068] ring-1 ring-[#bbb]" />
  </button>
);

type BandData = {
  name: string;
  pts: string;
  dot: [number, number];
  red: [string, number];
  lev: [string, number, number];
  knobs: number[];
  vals: string[];
};

const BANDS: BandData[] = [
  { name: 'Sub band', pts: 'M0 186L58 129L104 80Q110 76 117 73L141 62L201 31', dot: [117, 73], red: ['-0.17', 98], lev: ['-1.08', 60, 88], knobs: [0.8, 0.84, 0.5, 0.8, 0.22, 0.17], vals: ['150 ms', '300 ms', '9.0 dB', '-12.0 dB', '2', '6.0 dB'] },
  { name: 'Low band', pts: 'M0 186L58 129L95 92Q105 84 119 77L201 37', dot: [119, 77], red: ['-0.70', 91], lev: ['-1.68', 81, 81], knobs: [0.72, 0.79, 0.5, 0.68, 0.22, 0.17], vals: ['100 ms', '200 ms', '9.0 dB', '-18.0 dB', '2', '6.0 dB'] },
  { name: 'Mid band', pts: 'M0 186L58 129L86 101Q95 94 116 86L201 44', dot: [116, 86], red: ['-0.38', 96], lev: ['-2.23', 66, 77], knobs: [0.65, 0.73, 0.5, 0.56, 0.22, 0.17], vals: ['50 ms', '100 ms', '9.0 dB', '-24.0 dB', '2', '6.0 dB'] },
  { name: 'High band', pts: 'M0 186L57 129L76 112Q84 105 104 98L201 50', dot: [104, 98], red: ['0.00', 100], lev: ['-6.06', 45, 49], knobs: [0.61, 0.65, 0.5, 0.49, 0.22, 0.17], vals: ['25 ms', '50 ms', '9.0 dB', '-30.0 dB', '2', '6.0 dB'] },
];

const Graph = ({ pts, dot }: { pts: string; dot: [number, number] }) => (
  <div className="border-5 border-black border-t-[#2c2c2c] bg-[#e0fa80]">
    <svg viewBox="0 0 200 200" preserveAspectRatio="none" className="block h-[200px] w-full">
      <defs>
        <linearGradient id="lcd" x2="0" y2="1">
          <stop offset="0" stopColor="#e2fb84" />
          <stop offset=".38" stopColor="#c6e070" />
          <stop offset=".39" stopColor="#b2cc56" />
          <stop offset=".8" stopColor="#d4f068" />
          <stop offset="1" stopColor="#e0fb72" />
        </linearGradient>
      </defs>
      <rect width="200" height="200" fill="url(#lcd)" />
      <g stroke="#6a7c30" strokeWidth=".7">
        {Array.from({ length: 16 }, (_, i) => <path key={i} opacity=".4" d={`M${141 + (i - 11) * 12.6} 0V200`} />)}
        {Array.from({ length: 16 }, (_, i) => <path key={i} opacity={i % 2 ? 0.35 : 0.7} d={`M0 ${61.5 + (i - 4) * 12.5}H200`} />)}
        <path d="M0 200L200 2" opacity=".7" />
      </g>
      <path d="M141 0V200M0 61.5H200" stroke="#2c3410" strokeWidth="1.2" />
      <path d={pts} fill="none" stroke="#586a2c" strokeWidth="1.8" />
      <circle cx={dot[0]} cy={dot[1]} r="3.5" fill="#586a2c" />
      <g fontSize="10" fontFamily="Open Sans, sans-serif" fill="#3a4614" textAnchor="end">
        {[24, 12, 0, -12, -24, -36, -48, -60].map((d, i) => <text key={d} x="197" y={15 + i * 25}>{d} dB</text>)}
        {[-48, -24, 0, 24].map((d, i) => <text key={d} x={46 + i * 50} y="199">{d}</text>)}
      </g>
    </svg>
  </div>
);

const Band = ({ b, n }: { b: BandData; n: number }) => {
  const names = ['Attack', 'Release', 'Knee', 'Threshold', 'Ratio', 'Makeup'];
  return (
    <fieldset className="w-[225px] rounded-[14px] border-2 border-[#e8eaec] px-[5px] pb-1.5">
      <legend className="ml-0.5 px-0.5 leading-4">{b.name}</legend>
      <Graph pts={b.pts} dot={b.dot} />
      <div className="mt-1"><MeterBar blue lit={b.red[1]} peak={n === 4 ? undefined : b.red[1]} value={b.red[0]} /></div>
      <div className="mt-1"><MeterBar lit={b.lev[1]} peak={b.lev[2]} value={b.lev[0]} /></div>
      <div className="mt-1.5 flex items-center justify-between">
        <span className="pl-0.5">Detection {n}</span>
        <LcdSelect label={`Detection ${n}`} value="RMS" className="mr-0.5 w-[131px]" />
      </div>
      <div className="mt-[5px] grid grid-cols-3 text-center leading-4">
        {names.map((k, i) => (
          <div key={k} className="flex flex-col items-center gap-0.5 whitespace-nowrap">
            <span>{k} {n}</span>
            <Knob label={`${k} ${n}`} f={b.knobs[i]} />
            <span className="mb-px">{b.vals[i]}</span>
          </div>
        ))}
      </div>
      <div className="mt-[18px] flex h-5 items-center justify-between px-1">
        <Toggle label={`Bypass ${n}`} className="h-5 w-[30px]" />
        <span>Bypass {n}</span>
        <span className="ml-3">Solo {n}</span>
        <Toggle label={`Solo ${n}`} className="h-5 w-[30px]" />
      </div>
    </fieldset>
  );
};

const IoKnob = ({ label }: { label: string }) => (
  <div className="flex w-[68px] flex-col items-center pt-1.5 leading-4">
    <span>{label}</span>
    <Knob label={label} f={0.59} big />
    <span>0.0 dB</span>
  </div>
);

const Split = ({ n, range, freq, f, className }: { n: number; range: string; freq: string; f: number; className: string }) => (
  <div className={clsx('pt-3', className)}>
    <div className="flex h-[41px]">
      <Knob label={`Split ${range}`} f={f} />
      <div className="ml-[18px] pt-1 leading-[14px]">Split {range}<br />{freq}</div>
    </div>
    {[['S', '-0.17'], ['Q', '-2.2 dB']].map(([k, v]) => (
      <div key={k} className="flex h-6 items-center">
        <Knob label={`${k}${n}`} f={0.46} small />
        <span className="ml-1 w-10">{k}{n}</span>
        <span>{v}</span>
      </div>
    ))}
  </div>
);

const Compressor = () => (
  <section className="absolute top-[133px] left-[2695px] w-[972px] border-b border-l border-[#8f999f] shadow-[0_4px_12px_#000]">
    <TitleBar title="master: Calf Multiband Compressor (by Markus Schmidt / Thor Harald Joh ...)" active gap="ml-4">
      <WinButton kind="min" />
      <WinButton kind="close" hot />
    </TitleBar>
    <div className="flex h-[37px] items-center justify-end bg-[#54545c] pr-2.5 text-[13px]">
      <div className="flex h-[25px] w-[31px] items-center justify-end border border-dotted border-[#c0c0c4]"><UpDown /></div>
      <button className="ml-1.5 h-[25px] w-[34px] rounded border border-[#3a3a42] bg-[#5b5b63] text-white">Add</button>
      <button className="ml-1.5 h-[25px] w-[37px] rounded border border-[#44444c] text-[#3c3c44]" disabled>Save</button>
      <button className="ml-1.5 h-[25px] w-[51px] rounded border border-[#44444c] text-[#3c3c44]" disabled>Delete</button>
      <button className={clsx(WARM, 'ml-4 h-[25px] w-[63px] gap-0.5')}>Bypass<Led color="bg-[#800000]" /></button>
      <svg viewBox="0 0 30 17" className="ml-4 h-[17px] w-[30px]">
        <path d="M4 0h22l4 14v3H0v-3z" fill="#e8e8e4" />
        <path d="M5 3h20M4.5 6h21M4 9h22M3.5 12h23" stroke="#9a9a96" strokeWidth="1.3" strokeDasharray="1.8 .9" />
      </svg>
    </div>
    <div className="bg-[linear-gradient(165deg,#3c4c62_0%,#33414f_8%,#4b617e_22%,#333f50_36%,#465a74_52%,#303c4c_66%,#465a75_82%,#2f3b4a_92%,#435670_100%)] pb-[9px] text-[12px] text-[#eef0f4]">
      <div className="flex h-[103px] pl-4">
        <IoKnob label="Input" />
        <StereoMeter name="Input" l="-0.98" r="-1.05" />
        <div className="ml-[18px] flex">
          <Split n={1} range="1/2" freq="120 Hz" f={0.32} className="w-[137px]" />
          <Split n={2} range="2/3" freq="1000 Hz" f={0.59} className="w-[137px]" />
          <Split n={3} range="3/4" freq="6000 Hz" f={0.83} className="w-[123px]" />
        </div>
        <StereoMeter name="Output" l="-0.33" r="-0.41" hot />
        <IoKnob label="Output" />
        <div className="ml-1 w-[60px] pt-3.5 text-center">
          <div className="leading-4">Bypass</div>
          <Toggle label="Bypass" className="mt-0.5 h-[38px] w-full" />
        </div>
      </div>
      <div className="flex items-center pl-[317px]">
        <span className="w-[134px]">Filter Mode</span>
        <LcdSelect label="Filter Mode" value="36dB" className="w-[202px]" />
      </div>
      <div className="mt-1.5 flex gap-[9px] pl-[22px]">
        {BANDS.map((b, i) => <Band key={b.name} b={b} n={i + 1} />)}
      </div>
    </div>
  </section>
);

const App = () => (
  <main className="relative flex items-start overflow-hidden bg-white font-['Open_Sans','Noto_Sans',sans-serif]">
    <Editor />
    <Mixer />
    <Compressor />
  </main>
);

export default App;
